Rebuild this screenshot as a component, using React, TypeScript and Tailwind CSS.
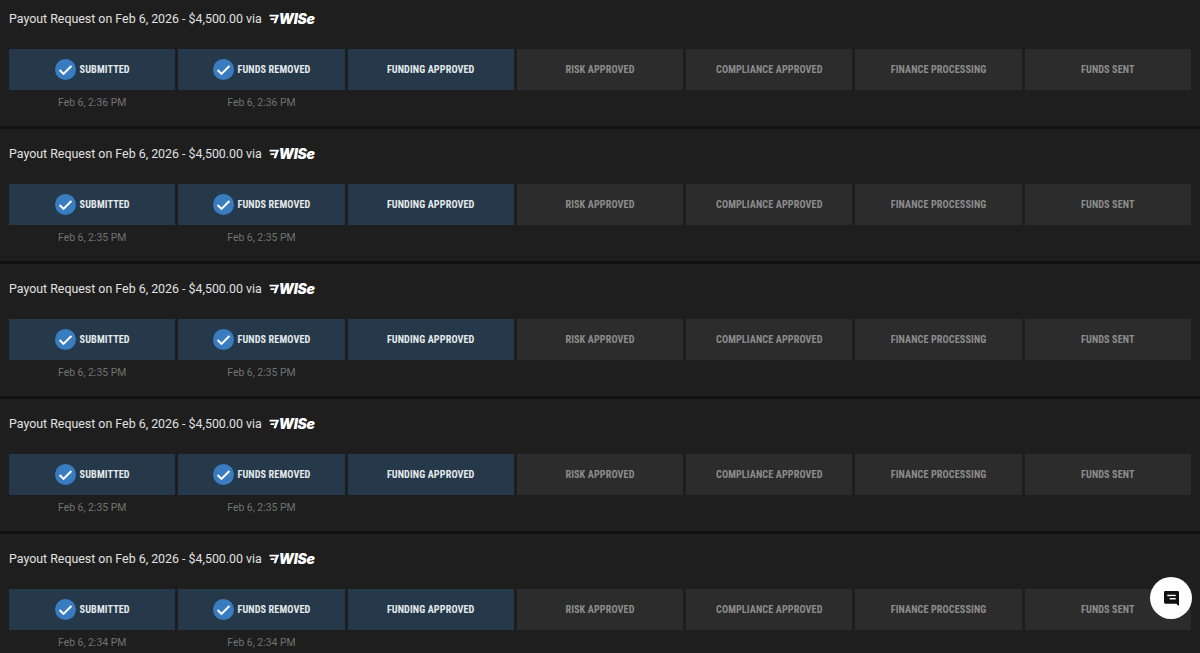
import { type ReactElement } from 'react';

interface Payout {
  id: number;
  time: string;
}

const payouts: Payout[] = [
  { id: 1, time: 'Feb 6, 2:36 PM' },
  { id: 2, time: 'Feb 6, 2:35 PM' },
  { id: 3, time: 'Feb 6, 2:35 PM' },
  { id: 4, time: 'Feb 6, 2:35 PM' },
  { id: 5, time: 'Feb 6, 2:34 PM' },
];

const steps = [
  { label: 'SUBMITTED', state: 'done' },
  { label: 'FUNDS REMOVED', state: 'done' },
  { label: 'FUNDING APPROVED', state: 'active' },
  { label: 'RISK APPROVED', state: 'todo' },
  { label: 'COMPLIANCE APPROVED', state: 'todo' },
  { label: 'FINANCE PROCESSING', state: 'todo' },
  { label: 'FUNDS SENT', state: 'todo' },
];

const CheckCircle = (): ReactElement => (
  <svg viewBox="0 0 21 21" className="h-[21px] w-[21px] shrink-0">
    <circle cx="10.5" cy="10.5" r="10.5" fill="#3a7cc0" />
    <path d="M4.6 11l3.9 3.9L16.4 7" fill="none" stroke="#fff" strokeWidth="2" />
  </svg>
);

const WiseLogo = (): ReactElement => (
  <span className="ml-[7px] flex items-center">
    <svg viewBox="0 0 12 10" className="h-[10px] w-[10px] shrink-0">
      <path d="M0.6 0H12L11.3 2H0.6z" fill="#fff" />
      <path d="M11.8 0.5L8.4 10H5.4L8.2 2z" fill="#fff" />
      <path d="M2.2 4.2H7L6.3 6.2H1.5z" fill="#fff" />
    </svg>
    <span className="font-['Inter',sans-serif] text-[14px] leading-none font-black tracking-[-0.3px] text-white italic">
      WISe
    </span>
  </span>
);

const StepCell = ({ label, state, time }: { label: string; state: string; time: string }): ReactElement => {
  const done = state === 'done';
  const bg = state === 'todo' ? 'bg-[#2c2c2c] text-[#8c8c8c]' : 'bg-[#25394b] text-[#e6e9ec]';
  return (
    <div className="min-w-0 flex-1">
      <div className={`flex h-[41.5px] items-center justify-center gap-[4px] ${bg}`}>
        {done && <CheckCircle />}
        <span className="pt-[1px] font-['Roboto',sans-serif] text-[10.2px] font-bold tracking-[0.1px] whitespace-nowrap [font-stretch:75%]">
          {label}
        </span>
      </div>
      {done && <div className="mt-[6px] text-center text-[10.4px] leading-[14px] text-[#727272]">{time}</div>}
    </div>
  );
};

const PayoutCard = ({ time }: Payout): ReactElement => (
  <section className="h-[132px] shrink-0 bg-[#1e1e1e] px-[9px] pt-[16px]">
    <div className="flex h-[18px] items-center text-[12.4px] text-[#e0e0e0]">
      Payout Request on Feb 6, 2026 - $4,500.00 via
      <WiseLogo />
    </div>
    <div className="mt-[20.5px] flex gap-[3px]">
      {steps.map((s) => (
        <StepCell key={s.label} label={s.label} state={s.state} time={time} />
      ))}
    </div>
  </section>
);

export default function App(): ReactElement {
  return (
    <div className="h-[653px] overflow-hidden bg-[#111111]">
      <main className="-mt-[6px] flex flex-col gap-[3px] font-['Roboto',sans-serif]">
        {payouts.map((p) => (
          <PayoutCard key={p.id} {...p} />
        ))}
      </main>
      <button className="fixed top-[577px] left-[1150px] flex h-[42px] w-[42px] items-center justify-center rounded-full bg-white">
        <svg viewBox="0 0 16 16" className="h-[15px] w-[15px]">
          <path d="M1.5 0h13A1.5 1.5 0 0 1 16 1.5V16l-3-2.5H1.5A1.5 1.5 0 0 1 0 12V1.5A1.5 1.5 0 0 1 1.5 0z" fill="#111" />
          <rect x="3.5" y="4" width="9" height="1.5" fill="#fff" />
          <rect x="6" y="7.5" width="6.5" height="1.5" fill="#fff" />
        </svg>
      </button>
    </div>
  );
}
